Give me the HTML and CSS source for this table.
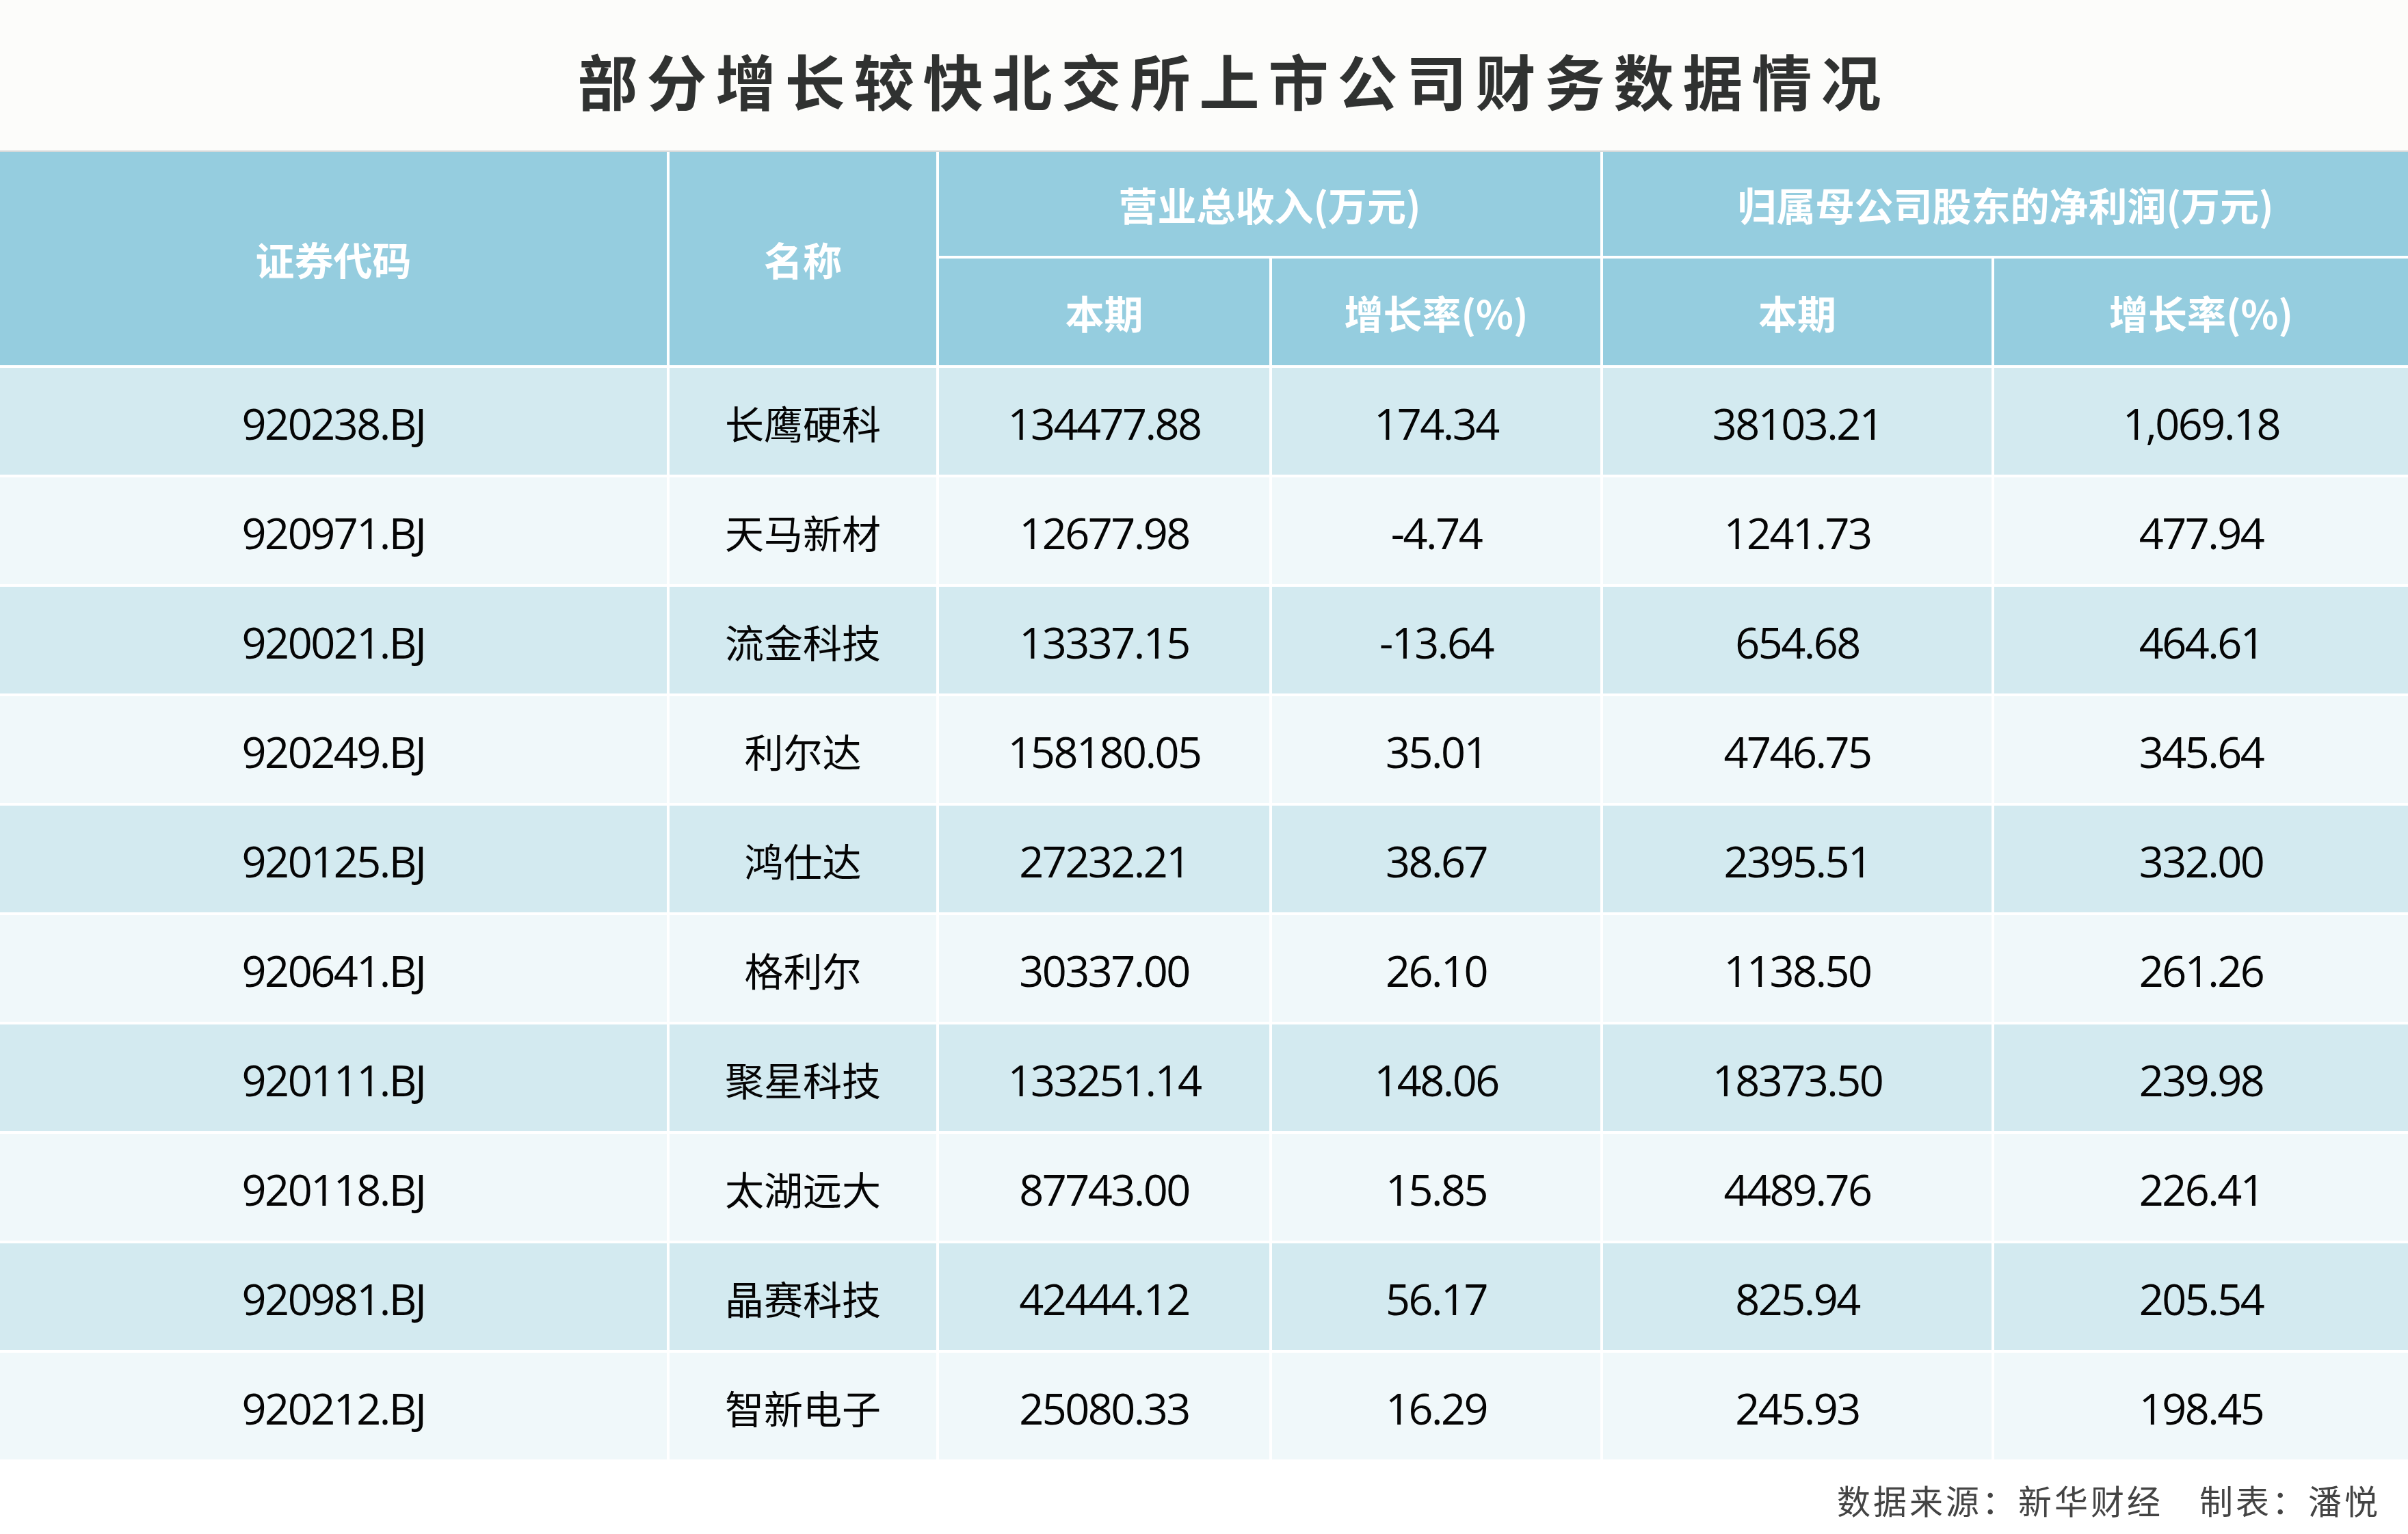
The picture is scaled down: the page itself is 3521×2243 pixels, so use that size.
FILE: index.html
```html
<!DOCTYPE html>
<html lang="zh-CN">
<head>
<meta charset="utf-8">
<title>部分增长较快北交所上市公司财务数据情况</title>
<link rel="stylesheet" href="styles.css">
</head>
<body>
<div class="page">
  <header class="title-bar">
    <h1 class="title">部分增长较快北交所上市公司财务数据情况</h1>
  </header>
  <div class="grid">
    <div class="hd span-r2">证券代码</div>
    <div class="hd span-r2">名称</div>
    <div class="hd span-c2">营业总收入(万元)</div>
    <div class="hd span-c2">归属母公司股东的净利润(万元)</div>
    <div class="hd">本期</div>
    <div class="hd">增长率(%)</div>
    <div class="hd">本期</div>
    <div class="hd">增长率(%)</div>

    <div class="row"><div class="c num">920238.BJ</div><div class="c name">长鹰硬科</div><div class="c num">134477.88</div><div class="c num">174.34</div><div class="c num">38103.21</div><div class="c num">1,069.18</div></div>
    <div class="row"><div class="c num">920971.BJ</div><div class="c name">天马新材</div><div class="c num">12677.98</div><div class="c num">-4.74</div><div class="c num">1241.73</div><div class="c num">477.94</div></div>
    <div class="row"><div class="c num">920021.BJ</div><div class="c name">流金科技</div><div class="c num">13337.15</div><div class="c num">-13.64</div><div class="c num">654.68</div><div class="c num">464.61</div></div>
    <div class="row"><div class="c num">920249.BJ</div><div class="c name">利尔达</div><div class="c num">158180.05</div><div class="c num">35.01</div><div class="c num">4746.75</div><div class="c num">345.64</div></div>
    <div class="row"><div class="c num">920125.BJ</div><div class="c name">鸿仕达</div><div class="c num">27232.21</div><div class="c num">38.67</div><div class="c num">2395.51</div><div class="c num">332.00</div></div>
    <div class="row"><div class="c num">920641.BJ</div><div class="c name">格利尔</div><div class="c num">30337.00</div><div class="c num">26.10</div><div class="c num">1138.50</div><div class="c num">261.26</div></div>
    <div class="row"><div class="c num">920111.BJ</div><div class="c name">聚星科技</div><div class="c num">133251.14</div><div class="c num">148.06</div><div class="c num">18373.50</div><div class="c num">239.98</div></div>
    <div class="row"><div class="c num">920118.BJ</div><div class="c name">太湖远大</div><div class="c num">87743.00</div><div class="c num">15.85</div><div class="c num">4489.76</div><div class="c num">226.41</div></div>
    <div class="row"><div class="c num">920981.BJ</div><div class="c name">晶赛科技</div><div class="c num">42444.12</div><div class="c num">56.17</div><div class="c num">825.94</div><div class="c num">205.54</div></div>
    <div class="row"><div class="c num">920212.BJ</div><div class="c name">智新电子</div><div class="c num">25080.33</div><div class="c num">16.29</div><div class="c num">245.93</div><div class="c num">198.45</div></div>
  </div>
  <p class="source">数据来源：新华财经　制表：潘悦</p>
</div>
</body>
</html>
```
FILE: styles.css
```css
html, body {
  margin: 0;
  padding: 0;
  background: #ffffff;
}

.page {
  width: 3521px;
  height: 2243px;
  background: #ffffff;
  font-family: "Noto Sans CJK SC", "Noto Sans", sans-serif;
  overflow: hidden;
}

.title-bar {
  background: #fcfcfa;
  border-bottom: 2px solid #d6d9da;
  display: flex;
  align-items: center;
  justify-content: center;
  padding: 12px 0 0 87px;
  box-sizing: border-box;
  height: 222px;
}

.title {
  margin: 0;
  font-size: 88px;
  line-height: 1;
  font-weight: 700;
  letter-spacing: 13px;
  color: #303231;
}

.grid {
  display: grid;
  grid-template-columns: 975px 390px 483px 480px 568px 605px;
  grid-template-rows: 152px 156px repeat(10, 156px);
  gap: 4px;
  background: #ffffff;
}

.hd {
  background: #95cddf;
  color: #ffffff;
  font-weight: 700;
  font-size: 57px;
  line-height: 1;
  display: flex;
  align-items: center;
  justify-content: center;
}

.span-r2 {
  grid-row: span 2;
}

.span-c2 {
  grid-column: span 2;
}

.row {
  display: contents;
}

.c {
  display: flex;
  align-items: center;
  justify-content: center;
  color: #050505;
  line-height: 1;
  background: #d3eaf0;
}

.row:nth-child(even) .c {
  background: #f0f8fa;
}

.num {
  font-family: "Open Sans", "Noto Sans", sans-serif;
  font-size: 63px;
  letter-spacing: -2.5px;
  padding-top: 4px;
}

.name {
  font-family: "Noto Sans CJK SC", sans-serif;
  font-size: 57px;
  padding-top: 2px;
}

.source {
  margin: 0;
  padding: 34px 40px 0 0;
  text-align: right;
  font-size: 49px;
  line-height: 1;
  letter-spacing: 4px;
  color: #444444;
  font-weight: 400;
}
```
